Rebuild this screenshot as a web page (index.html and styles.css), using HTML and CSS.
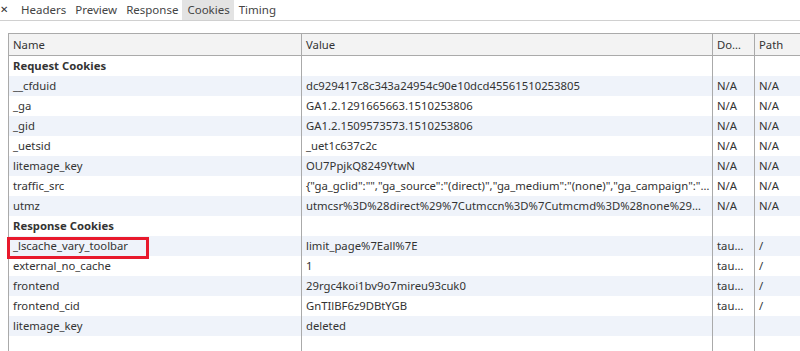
FILE: index.html
```html
<!DOCTYPE html>
<html>
<head>
<meta charset="utf-8">
<link rel="stylesheet" href="styles.css">
</head>
<body>
<div class="tabbar">
  <span class="close">✕</span>
  <span class="tab">Headers</span>
  <span class="tab">Preview</span>
  <span class="tab">Response</span>
  <span class="tab active">Cookies</span>
  <span class="tab">Timing</span>
</div>
<div class="content">
<table class="grid">
  <colgroup><col class="c-name"><col class="c-value"><col class="c-dom"><col class="c-path"></colgroup>
  <thead>
    <tr><th>Name</th><th>Value</th><th>Do…</th><th>Path</th></tr>
  </thead>
  <tbody>
    <tr class="group"><td>Request Cookies</td><td></td><td></td><td></td></tr>
    <tr class="odd"><td>__cfduid</td><td>dc929417c8c343a24954c90e10dcd45561510253805</td><td>N/A</td><td>N/A</td></tr>
    <tr><td>_ga</td><td>GA1.2.1291665663.1510253806</td><td>N/A</td><td>N/A</td></tr>
    <tr class="odd"><td>_gid</td><td>GA1.2.1509573573.1510253806</td><td>N/A</td><td>N/A</td></tr>
    <tr><td>_uetsid</td><td>_uet1c637c2c</td><td>N/A</td><td>N/A</td></tr>
    <tr class="odd"><td>litemage_key</td><td>OU7PpjkQ8249YtwN</td><td>N/A</td><td>N/A</td></tr>
    <tr><td>traffic_src</td><td>{"ga_gclid":"","ga_source":"(direct)","ga_medium":"(none)","ga_campaign":"…</td><td>N/A</td><td>N/A</td></tr>
    <tr class="odd"><td>utmz</td><td>utmcsr%3D%28direct%29%7Cutmccn%3D%7Cutmcmd%3D%28none%29…</td><td>N/A</td><td>N/A</td></tr>
    <tr class="group"><td>Response Cookies</td><td></td><td></td><td></td></tr>
    <tr class="odd"><td class="marked">_lscache_vary_toolbar<span class="mark"></span></td><td>limit_page%7Eall%7E</td><td>tau…</td><td>/</td></tr>
    <tr><td>external_no_cache</td><td>1</td><td>tau…</td><td>/</td></tr>
    <tr class="odd"><td>frontend</td><td>29rgc4koi1bv9o7mireu93cuk0</td><td>tau…</td><td>/</td></tr>
    <tr><td>frontend_cid</td><td>GnTIlBF6z9DBtYGB</td><td>tau…</td><td>/</td></tr>
    <tr class="odd"><td>litemage_key</td><td>deleted</td><td></td><td></td></tr>
    <tr class="filler"><td></td><td></td><td></td><td></td></tr>
  </tbody>
</table>
</div>
</body>
</html>
```

FILE: styles.css
```css
html, body {
  margin: 0;
  padding: 0;
  background: #fff;
  overflow: hidden;
}
body {
  font-family: "Noto Sans", "Open Sans", sans-serif;
  font-size: 11.3px;
  color: #333;
  width: 800px;
  height: 351px;
}
.tabbar {
  display: flex;
  align-items: stretch;
  height: 20px;
  border-bottom: 1px solid #d0d0d0;
}
.close {
  width: 14px;
  font-size: 10px;
  line-height: 18px;
  color: #333;
  margin-right: 2px;
}
.tab {
  padding: 0 4px 0 5px;
  line-height: 19px;
  color: #444;
  font-size: 11.5px;
}
.tab.active {
  background: #e3e3e3;
}
.content {
  padding: 12px 0 0 8px;
}
.grid {
  border-collapse: collapse;
  table-layout: fixed;
  width: 800px;
}
.c-name { width: 293px; }
.c-value { width: 411px; }
.c-dom { width: 42px; }
.c-path { width: 54px; }
.grid th, .grid td {
  border-left: 1px solid #aaa;
  border-right: 1px solid #aaa;
  padding: 0 4px;
  white-space: nowrap;
  overflow: hidden;
  text-align: left;
  height: 20px;
  line-height: 20px;
  font-weight: normal;
}
.grid th {
  background: #f3f3f3;
  border-top: 1px solid #aaa;
  border-bottom: 1px solid #aaa;
  height: 21px;
}
.grid tr.odd td {
  background: #eff3fa;
}
.grid tr.group td {
  font-weight: bold;
}
.grid tr.filler td {
  height: 30px;
}
.grid td.marked {
  position: relative;
  overflow: visible;
}
.mark {
  position: absolute;
  left: -2px;
  top: 1px;
  width: 136px;
  height: 16px;
  border: 3px solid #e8192c;
}
```
